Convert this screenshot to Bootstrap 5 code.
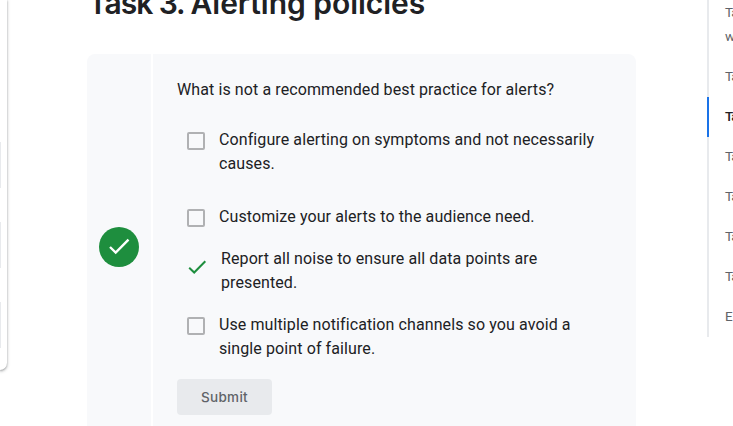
<!DOCTYPE html>
<html lang="en">
<head>
<meta charset="utf-8">
<meta name="viewport" content="width=device-width, initial-scale=1">
<title>Task 3. Alerting policies</title>
<link href="https://cdn.jsdelivr.net/npm/bootstrap@5.3.0/dist/css/bootstrap.min.css" rel="stylesheet">
<style>
body{font-family:Roboto,sans-serif;font-size:16px;line-height:24px;color:#202124;background:#fff}
.page{width:733px;height:426px}
.side-panel{width:7px;height:370px;border-radius:0 0 8px 0;box-shadow:0 1px 2px rgba(60,64,67,.4),0 1px 3px 1px rgba(60,64,67,.15);padding-top:142px;gap:34px}
.side-field{width:1px;height:46px;background:#e8eaed}
.lesson{width:549px;margin-left:80px}
.lesson-title{font:600 30px/40px Inter,sans-serif;margin:-17px 0 0 1px;height:71px;white-space:nowrap;color:#202124;letter-spacing:-.03px}
.lesson-title span{letter-spacing:-1.05px}
.quiz{border-radius:8px 8px 0 0;background:#f8f9fb;height:372px}
.quiz-status{width:66px;border-right:2px solid #fff;padding-top:173px}
.status-dot{width:40px;height:40px;margin-left:12px;border-radius:50%;background:#1e8e3e}
.quiz-body{padding:24px 24px 0;letter-spacing:.1px}
.question{margin-bottom:26px}
.choice{padding-left:10px;white-space:nowrap}
.choice-box{width:18px;height:18px;margin:4px 14px 0 0;border:2px solid #b0b1b3;border-radius:2px}
.choice-check{width:24px;height:24px;margin:8px 12px 0 -2px}
.gap-a{margin-bottom:29px}.gap-b{margin-bottom:18px}
.submit-btn{width:95px;height:36px;margin-top:18px;padding:0;border:0;border-radius:4px;background:#e8eaed;color:#5f6368;font:500 13.5px/36px Inter,sans-serif;letter-spacing:.3px}
.toc{width:26px;height:337px;margin-left:71px;border-left:2px solid #e8eaed;font:400 13.5px/24px Roboto,sans-serif;color:#5f6368;white-space:nowrap;letter-spacing:-1px}
.toc a{display:block;padding:7px 0 9px 16px;color:inherit;text-decoration:none}
.toc a:first-child{margin-top:-7px}
.toc a.current{margin-left:-2px;padding-left:16px;border-left:2px solid #1a73e8;color:#202124;font-weight:500}
</style>
</head>
<body>
<div class="page d-flex align-items-start overflow-hidden">
  <aside class="side-panel d-flex flex-column flex-shrink-0">
    <span class="side-field"></span><span class="side-field"></span><span class="side-field"></span>
  </aside>
  <main class="lesson flex-shrink-0">
    <h2 class="lesson-title"><span>Task 3. </span>Alerting policies</h2>
    <section class="quiz d-flex">
      <div class="quiz-status flex-shrink-0">
        <div class="status-dot d-flex align-items-center justify-content-center">
          <svg width="24" height="24" viewBox="0 0 24 24" fill="none" stroke="#fff" stroke-width="2.4"><path d="M3 12 8.7 17.5 21.5 4.7"/></svg>
        </div>
      </div>
      <form class="quiz-body flex-grow-1">
        <p class="question">What is not a recommended best practice for alerts?</p>
        <div class="choice d-flex gap-a"><span class="choice-box flex-shrink-0"></span><div>Configure alerting on symptoms and not necessarily<br>causes.</div></div>
        <div class="choice d-flex gap-b"><span class="choice-box flex-shrink-0"></span><div>Customize your alerts to the audience need.</div></div>
        <div class="choice d-flex gap-b"><svg class="choice-check flex-shrink-0" viewBox="0 0 24 24" fill="none" stroke="#1e8e3e" stroke-width="2"><path d="M4.2 12.7 9.2 17.5 20.3 6.3"/></svg><div>Report all noise to ensure all data points are<br>presented.</div></div>
        <div class="choice d-flex"><span class="choice-box flex-shrink-0"></span><div>Use multiple notification channels so you avoid a<br>single point of failure.</div></div>
        <button type="button" class="btn submit-btn">Submit</button>
      </form>
    </section>
  </main>
  <nav class="toc flex-shrink-0">
    <a href="#">Ta<br>w</a>
    <a href="#">Ta</a>
    <a href="#" class="current">Ta</a>
    <a href="#">Ta</a>
    <a href="#">Ta</a>
    <a href="#">Ta</a>
    <a href="#">Ta</a>
    <a href="#">E</a>
  </nav>
</div>
</body>
</html>
